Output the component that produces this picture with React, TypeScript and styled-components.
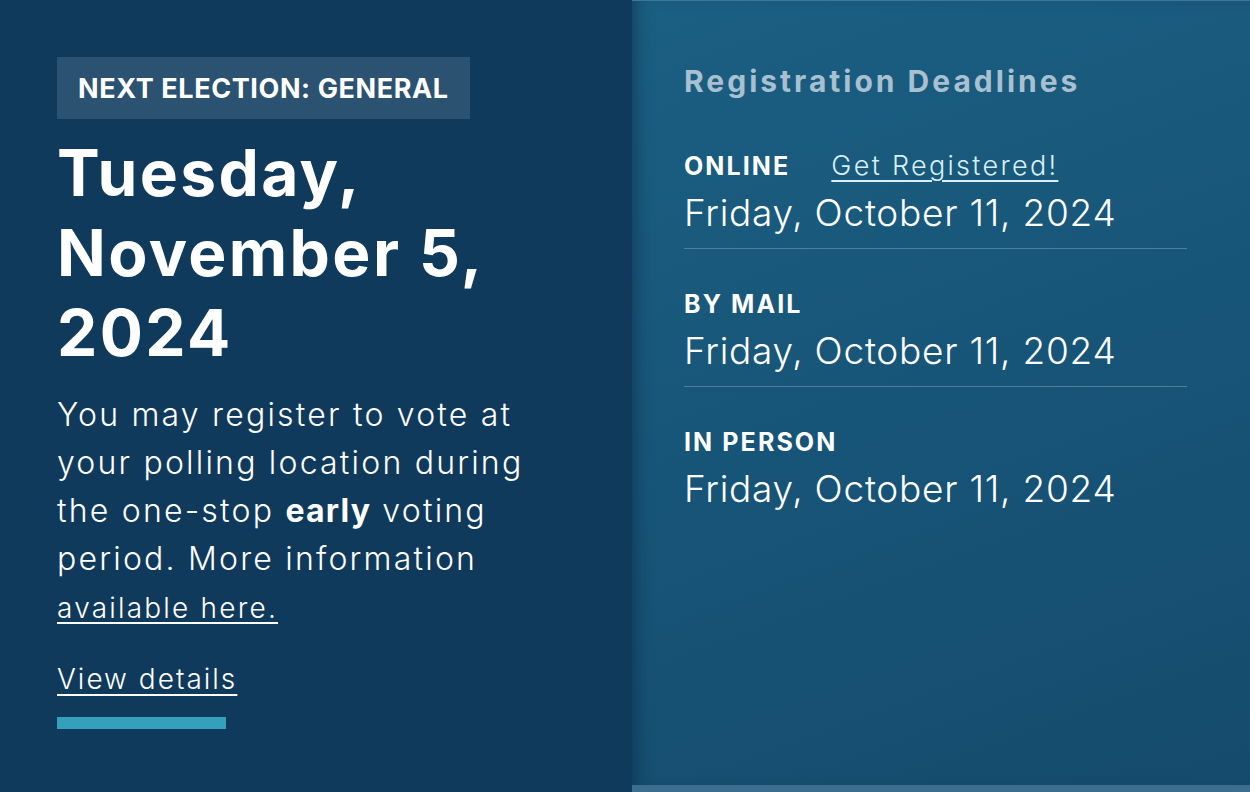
import React from "react";
import styled, { createGlobalStyle } from "styled-components";

const GlobalStyle = createGlobalStyle`
  html, body { margin: 0; padding: 0; background: #0f3a5c; }
  body { font-family: "Inter", "Noto Sans", sans-serif; -webkit-font-smoothing: antialiased; }
  * { box-sizing: border-box; }
`;

const Page = styled.div`
  display: flex;
  width: 1250px;
  height: 792px;
  overflow: hidden;
`;

const LeftPanel = styled.section`
  width: 632px;
  flex: none;
  background: #0f3a5c;
  padding: 57px 0 0 57px;
  color: #ffffff;
  display: flex;
  flex-direction: column;
  align-items: flex-start;
`;

const Badge = styled.div`
  background: #2b5270;
  height: 62px;
  padding: 0 21px;
  display: flex;
  align-items: center;
  font-size: 27px;
  font-weight: 700;
  letter-spacing: 0.6px;
  text-transform: uppercase;
`;

const Headline = styled.h1`
  margin: 14px 0 0;
  font-size: 64px;
  line-height: 80px;
  font-weight: 700;
  letter-spacing: 2.4px;
  width: 480px;
`;

const Body = styled.p`
  margin: 18px 0 0;
  font-size: 32px;
  line-height: 48px;
  font-weight: 300;
  width: 500px;
  letter-spacing: 2.2px;
  strong { font-weight: 700; letter-spacing: 1.2px; }
`;

const BodyLink = styled.a`
  color: #ffffff;
  text-decoration: underline;
  text-underline-offset: 4px;
  text-decoration-thickness: 2px;
  font-size: 28px;
  letter-spacing: 2.2px;
`;

const DetailsLink = styled.a`
  margin-top: 26px;
  color: #ffffff;
  font-size: 28px;
  line-height: 42px;
  font-weight: 300;
  letter-spacing: 2px;
  text-decoration: underline;
  text-underline-offset: 5px;
  text-decoration-thickness: 2px;
`;

const AccentBar = styled.div`
  margin-top: 17px;
  width: 169px;
  height: 12px;
  background: #35a0bc;
`;

const RightPanel = styled.section`
  flex: 1;
  background: linear-gradient(160deg, #1b5f82 0%, #175578 50%, #154b6d 100%);
  border-top: 1px solid #3f7696;
  border-bottom: 7px solid #3c6f8f;
  box-shadow: inset 14px 0 18px -12px rgba(8, 35, 58, 0.55);
  padding: 62px 63px 0 52px;
  display: flex;
  flex-direction: column;
`;

const SectionTitle = styled.h2`
  margin: 0;
  font-size: 30px;
  line-height: 36px;
  font-weight: 700;
  color: #a8c0cf;
  letter-spacing: 3px;
`;

const List = styled.div`
  margin-top: 49px;
  display: flex;
  flex-direction: column;
`;

const Row = styled.div<{ $last?: boolean }>`
  padding-bottom: ${(p) => (p.$last ? 0 : 11)}px;
  margin-bottom: ${(p) => (p.$last ? 0 : 37)}px;
  border-bottom: ${(p) => (p.$last ? "none" : "1px solid #4c7f9f")};
`;

const LabelLine = styled.div`
  display: flex;
  align-items: baseline;
  gap: 41px;
  height: 36px;
  line-height: 36px;
`;

const Label = styled.span`
  font-size: 25px;
  font-weight: 700;
  color: #ffffff;
  letter-spacing: 2.1px;
  text-transform: uppercase;
`;

const RegisterLink = styled.a`
  font-size: 27px;
  font-weight: 300;
  color: #d8eff8;
  letter-spacing: 2.3px;
  text-decoration: underline;
  text-underline-offset: 5px;
  text-decoration-thickness: 2px;
`;

const DateText = styled.div`
  margin-top: 5px;
  font-size: 37px;
  line-height: 48px;
  font-weight: 300;
  color: #ffffff;
  letter-spacing: 0.75px;
`;

const deadlines = [
  { label: "Online", date: "Friday, October 11, 2024", link: "Get Registered!" },
  { label: "By Mail", date: "Friday, October 11, 2024" },
  { label: "In Person", date: "Friday, October 11, 2024" },
];

export default function App() {
  return (
    <>
      <GlobalStyle />
      <Page>
        <LeftPanel>
          <Badge>Next Election: General</Badge>
          <Headline>Tuesday, November 5, 2024</Headline>
          <Body>
            You may register to vote at your polling location during the one-stop{" "}
            <strong>early</strong> voting period. More information{" "}
            <BodyLink href="#">available here.</BodyLink>
          </Body>
          <DetailsLink href="#">View details</DetailsLink>
          <AccentBar />
        </LeftPanel>
        <RightPanel>
          <SectionTitle>Registration Deadlines</SectionTitle>
          <List>
            {deadlines.map((d, i) => (
              <Row key={d.label} $last={i === deadlines.length - 1}>
                <LabelLine>
                  <Label>{d.label}</Label>
                  {d.link && <RegisterLink href="#">{d.link}</RegisterLink>}
                </LabelLine>
                <DateText>{d.date}</DateText>
              </Row>
            ))}
          </List>
        </RightPanel>
      </Page>
    </>
  );
}
